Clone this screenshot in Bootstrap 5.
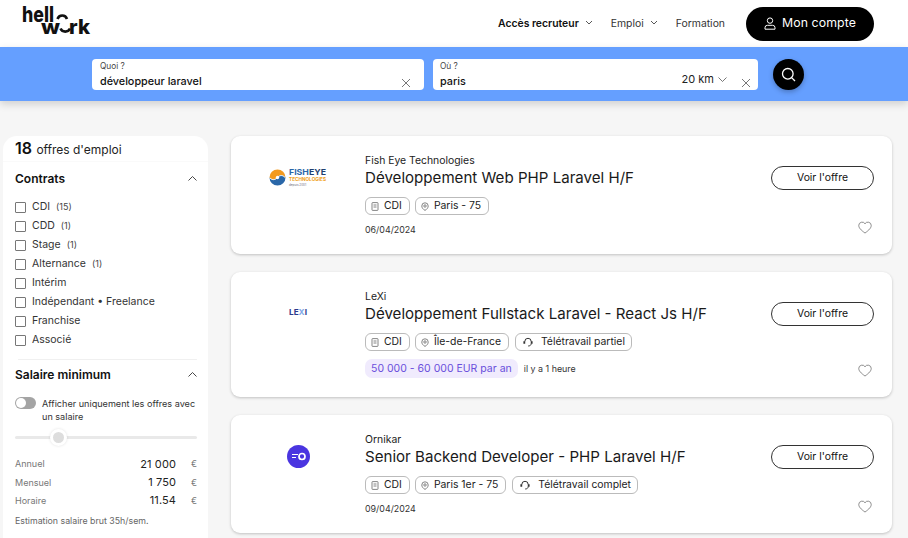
<!DOCTYPE html>
<html lang="fr"><head><meta charset="utf-8"><title>HelloWork</title>
<link href="https://cdn.jsdelivr.net/npm/bootstrap@5.3.0/dist/css/bootstrap.min.css" rel="stylesheet">
<style>
html,body{height:538px;overflow:hidden}
body{font-family:Inter,"Liberation Sans",sans-serif;background:#f6f6f6;color:#111;font-size:11px}
.hw-head{height:47px;background:#fff;padding:0 34px 0 22px}
.hw-logo{width:68px;height:36px;display:block;margin-top:-1px;overflow:visible}
.hw-logo text{font-family:Inter,sans-serif;font-weight:800;fill:#111}
.hw-nav{font-size:10.4px;color:#333;gap:18px;margin-right:21px}
.hw-nav b{color:#111;font-weight:600}
.hw-nav svg{width:8px;height:5px;margin-left:6px;vertical-align:2px}
.hw-acct{width:128px;height:34px;background:#000;color:#fff;border-radius:17px;font-size:12.3px;gap:6px;border:0;letter-spacing:.1px}
.hw-band{height:54px;background:#659fff;box-shadow:0 3px 8px rgba(0,0,0,.16);padding:12px 0 11px 92px;position:relative}
.hw-field{background:#fff;border-radius:4px;height:31px;padding:3px 7px 0 8px;position:relative;line-height:1}
.hw-f1{width:332px;margin-right:9px}.hw-f2{width:325px;margin-right:15px;padding-left:7px}
.hw-lab{font-size:8.3px;color:#444;display:block;margin-bottom:6px}
.hw-val{font-size:10.8px;font-weight:500;color:#111}
.hw-x{position:absolute;right:7px;bottom:2px;width:10px;height:10px}
.hw-f1 .hw-x{right:13px}
.hw-km{position:absolute;right:31px;bottom:5px;font-size:11px;color:#222;display:flex;align-items:center;gap:4px}
.hw-go{width:31px;height:31px;border-radius:50%;background:#000;box-shadow:0 2px 5px rgba(0,0,0,.25)}
.hw-main{padding:35px 15px 0 3px;gap:23px}
.hw-side{width:205px;height:420px;background:#fff;border-radius:14px 14px 0 0;flex:none}
.hw-count{height:26px;padding:0 12px;font-size:12px;color:#222;border-bottom:1px solid #fafafa}
.hw-count b{font-size:16px;font-weight:600;color:#111;margin-right:1px}
.hw-sect{padding:0 11px 0 12px}
.hw-s1{padding-top:8px}.hw-s2{padding-top:6px}
.hw-h{font-size:12px;font-weight:600;color:#111;height:17px}
.hw-h1{margin-bottom:10px}.hw-h2{margin-bottom:14px}
.hw-chk{height:19px;font-size:10.5px;color:#333;gap:6px;white-space:nowrap}
.hw-chk i{width:11px;height:11px;border:1px solid #777;border-radius:1px;display:block;flex:none;margin-top:1px}
.hw-chk small{font-size:9px;margin-left:6px;color:#444}
.hw-sep{border-top:1px solid #f0f0f0;margin:10px 11px 0 15px;height:0;border-radius:2px}
.hw-toggle{width:21px;height:12px;border-radius:6px;background:#a4a4a4;position:relative;flex:none}
.hw-toggle::after{content:"";position:absolute;left:1px;top:1px;width:10px;height:10px;background:#fff;border-radius:50%}
.hw-tt{font-size:9.1px;line-height:13px;color:#333;gap:6px;margin-right:-4px}
.hw-slide{height:3px;background:#e9e9e9;margin:13px 0 0;position:relative;border-radius:2px}
.hw-slide::after{content:"";position:absolute;left:35px;top:-7px;width:17px;height:17px;background:#ddd;border:3px solid #fff;border-radius:50%;box-shadow:0 0 3px rgba(0,0,0,.12)}
.hw-sal{height:18.3px;font-size:9px;color:#777}
.hw-sal span:nth-child(2){margin-left:auto;font-size:11px;color:#222;letter-spacing:.1px}
.hw-sal em{font-style:normal;width:21px;text-align:right;font-size:9px}
.hw-note{font-size:8.8px;color:#666;margin-top:4px}
.hw-list{width:661px;gap:18px}
.hw-job{background:#fff;border-radius:9px;box-shadow:0 1px 3px rgba(0,0,0,.22);padding:18px 18px 0 134px;position:relative;height:118px}
.hw-j2{height:125px}
.hw-brand{position:absolute;left:0;top:31px;width:134px;display:flex;justify-content:center}
.hw-j2 .hw-brand{top:33px}.hw-j3 .hw-brand{top:30px}
.hw-co{font-size:10.4px;color:#222;line-height:13px;margin-bottom:1px}
.hw-ti{font-size:15.1px;color:#1a1a1a;line-height:20px;margin:0 0 9px;font-weight:400}
.hw-tags{gap:5px}
.hw-tag{height:18px;border:1px solid #bbb;border-radius:6px;font-size:10.4px;color:#222;padding:0 7px 0 5px;gap:5px;background:#fff;white-space:nowrap}
.hw-tag svg{width:8px;height:9px;flex:none}
.hw-tag.hw-tw{gap:8px;padding:0 6px 0 7px;margin-left:1px}
.hw-tag.hw-tw svg{width:10px;height:10px}
.hw-date{font-size:8.9px;color:#333;line-height:11px}
.hw-d1{margin-top:9px}
.hw-paybox{margin-top:1px;gap:6px}
.hw-pay{background:#f0ebfd;color:#6a4fdc;font-size:10.5px;height:19px;padding:0 6px;border-radius:7px}
.hw-btn{position:absolute;right:18px;top:30px;width:103px;height:24px;border:1px solid #333;border-radius:12px;background:#fff;font-size:10.4px;color:#111}
.hw-heart{position:absolute;right:20px;bottom:20px;width:14px;height:13px}
</style></head><body>
<header class="hw-head d-flex align-items-center justify-content-between">
<svg class="hw-logo" viewBox="0 0 68 36" role="img" aria-label="hellowork">
<text x="0" y="16.500" font-size="22" textLength="32" lengthAdjust="spacingAndGlyphs">hell</text>
<path d="M35.500 14a5 5 0 0 1 9.500 0" fill="none" stroke="#111" stroke-width="2.600"/>
<text x="19" y="29" font-size="20" textLength="19" lengthAdjust="spacingAndGlyphs">w</text>
<path d="M38.500 23.500a5.200 5.200 0 0 0 9.500 0" fill="none" stroke="#111" stroke-width="2.600"/>
<text x="47" y="29" font-size="20" textLength="21" lengthAdjust="spacingAndGlyphs">rk</text></svg>
<div class="d-flex align-items-center">
<nav class="hw-nav d-flex align-items-center"><span><b>Accès recruteur</b><svg viewBox="0 0 8 5"><path d="M1 1l3 3 3-3" fill="none" stroke="#444" stroke-width=".9"/></svg></span><span>Emploi<svg viewBox="0 0 8 5"><path d="M1 1l3 3 3-3" fill="none" stroke="#444" stroke-width=".9"/></svg></span><span>Formation</span></nav>
<button class="hw-acct d-flex align-items-center justify-content-center"><svg width="12" height="13" viewBox="0 0 12 13" fill="none" stroke="#fff" stroke-width="1"><circle cx="6" cy="3.600" r="2.700"/><path d="M1 12.200v-1.500a2.400 2.400 0 0 1 2.400-2.400h5.200a2.400 2.400 0 0 1 2.400 2.400v1.500z"/></svg>Mon compte</button>
</div>
</header>
<section class="hw-band d-flex">
<div class="hw-field hw-f1"><span class="hw-lab">Quoi ?</span><span class="hw-val">développeur laravel</span><svg class="hw-x" viewBox="0 0 10 10"><path d="M1 1l8 8M9 1l-8 8" stroke="#555" stroke-width=".8"/></svg></div>
<div class="hw-field hw-f2"><span class="hw-lab">Où ?</span><span class="hw-val">paris</span><span class="hw-km">20 km<svg width="9" height="5" viewBox="0 0 9 5"><path d="M.5.5l4 4 4-4" fill="none" stroke="#555" stroke-width=".8"/></svg></span><svg class="hw-x" viewBox="0 0 10 10"><path d="M1 1l8 8M9 1l-8 8" stroke="#555" stroke-width=".8"/></svg></div>
<div class="hw-go d-flex align-items-center justify-content-center"><svg width="15" height="15" viewBox="0 0 15 15" fill="none" stroke="#fff" stroke-width="1.300"><circle cx="6.800" cy="6.800" r="5.300"/><path d="M10.600 10.600l3.400 3.400"/></svg></div>
</section>
<main class="hw-main d-flex align-items-start">
<aside class="hw-side">
<div class="hw-count"><b>18</b> offres d'emploi</div>
<div class="hw-sect hw-s1">
<div class="hw-h hw-h1 d-flex justify-content-between align-items-center">Contrats<svg width="9" height="5" viewBox="0 0 9 5"><path d="M.5 4.500l4-4 4 4" fill="none" stroke="#333" stroke-width=".9"/></svg></div>
<div class="hw-chk d-flex align-items-center"><i></i><span>CDI<small>(15)</small></span></div>
<div class="hw-chk d-flex align-items-center"><i></i><span>CDD<small>(1)</small></span></div>
<div class="hw-chk d-flex align-items-center"><i></i><span>Stage<small>(1)</small></span></div>
<div class="hw-chk d-flex align-items-center"><i></i><span>Alternance<small>(1)</small></span></div>
<div class="hw-chk d-flex align-items-center"><i></i><span>Intérim</span></div>
<div class="hw-chk d-flex align-items-center"><i></i><span>Indépendant • Freelance</span></div>
<div class="hw-chk d-flex align-items-center"><i></i><span>Franchise</span></div>
<div class="hw-chk d-flex align-items-center"><i></i><span>Associé</span></div>
</div>
<div class="hw-sep"></div>
<div class="hw-sect hw-s2">
<div class="hw-h hw-h2 d-flex justify-content-between align-items-center">Salaire minimum<svg width="9" height="5" viewBox="0 0 9 5"><path d="M.5 4.500l4-4 4 4" fill="none" stroke="#333" stroke-width=".9"/></svg></div>
<div class="hw-tt d-flex"><span class="hw-toggle"></span><span>Afficher uniquement les offres avec un salaire</span></div>
<div class="hw-slide"></div>
<div class="mt-3">
<div class="hw-sal d-flex align-items-center"><span>Annuel</span><span>21 000</span><em>€</em></div>
<div class="hw-sal d-flex align-items-center"><span>Mensuel</span><span>1 750</span><em>€</em></div>
<div class="hw-sal d-flex align-items-center"><span>Horaire</span><span>11.54</span><em>€</em></div>
</div>
<div class="hw-note">Estimation salaire brut 35h/sem.</div>
</div>
</aside>
<div class="hw-list d-flex flex-column">

<article class="hw-job">
<div class="hw-brand"><svg width="58" height="22" viewBox="0 0 58 22" role="img" aria-label="Fisheye Technologies"><path d="M.5 10.500A8 8 0 0 1 16.500 10.500C13 7.500 11 7.500 8.500 10.500 6 13.500 3 13.500 .5 10.500z" fill="#f39a1f"/><path d="M.5 10.500A8 8 0 0 0 16.500 10.500C13 7.500 11 7.500 8.500 10.500 6 13.500 3 13.500 .5 10.500z" fill="#2a67a8"/><path d="M1 11C3.500 13.500 6 13 8.500 10.500 11 8 13.500 7.800 16 10.500" fill="none" stroke="#fff" stroke-width=".9"/><circle cx="8.500" cy="10.500" r="1.700" fill="#fff"/><text x="20" y="8" font-size="8.200" font-weight="700" fill="#2a67a8" font-family="Inter" textLength="37" lengthAdjust="spacingAndGlyphs">FISH<tspan fill="#1f3f70">EYE</tspan></text><text x="20" y="14" font-size="5" font-weight="700" fill="#f0a020" font-family="Inter" textLength="37" lengthAdjust="spacingAndGlyphs">TECHNOLOGIES</text><text x="20" y="19" font-size="3" fill="#667" font-family="Inter">depuis 2001</text></svg></div>
<div class="hw-co">Fish Eye Technologies</div>
<h2 class="hw-ti">Développement Web PHP Laravel H/F</h2>
<div class="hw-tags d-flex mb-2">
<span class="hw-tag d-flex align-items-center"><svg viewBox="0 0 8 9" fill="none" stroke="#666" stroke-width=".8"><rect x="1" y=".6" width="6" height="7.800" rx=".6"/><path d="M2.500 3h3M2.500 5h3"/></svg>CDI</span>
<span class="hw-tag d-flex align-items-center"><svg viewBox="0 0 8 9" fill="none" stroke="#666" stroke-width=".8"><path d="M4 8.400C2 7.200.8 5.800.8 4a3.200 3.200 0 0 1 6.400 0c0 1.800-1.200 3.200-3.200 4.400z"/><circle cx="4" cy="4" r="1.200"/></svg>Paris - 75</span>
</div>
<div class="hw-date hw-d1">06/04/2024</div>
<button class="hw-btn">Voir l'offre</button>
<svg class="hw-heart" viewBox="0 0 15 14"><path d="M7.500 13C3 9.600.8 7.500.8 4.700A3.600 3.600 0 0 1 7.500 3a3.600 3.600 0 0 1 6.700 1.700c0 2.800-2.200 4.900-6.700 8.300z" fill="none" stroke="#777" stroke-width=".9"/></svg>
</article>

<article class="hw-job hw-j2">
<div class="hw-brand"><svg width="20" height="14" viewBox="0 0 20 14" role="img" aria-label="LeXi"><text x="1" y="10" font-size="8" font-weight="700" fill="#2d3a8c" font-family="Inter" textLength="18" lengthAdjust="spacingAndGlyphs">LE<tspan fill="#7fa8e8">X</tspan>I</text></svg></div>
<div class="hw-co">LeXi</div>
<h2 class="hw-ti">Développement Fullstack Laravel - React Js H/F</h2>
<div class="hw-tags d-flex mb-2">
<span class="hw-tag d-flex align-items-center"><svg viewBox="0 0 8 9" fill="none" stroke="#666" stroke-width=".8"><rect x="1" y=".6" width="6" height="7.800" rx=".6"/><path d="M2.500 3h3M2.500 5h3"/></svg>CDI</span>
<span class="hw-tag d-flex align-items-center"><svg viewBox="0 0 8 9" fill="none" stroke="#666" stroke-width=".8"><path d="M4 8.400C2 7.200.8 5.800.8 4a3.200 3.200 0 0 1 6.400 0c0 1.800-1.200 3.200-3.200 4.400z"/><circle cx="4" cy="4" r="1.200"/></svg>Île-de-France</span>
<span class="hw-tag hw-tw d-flex align-items-center"><svg viewBox="0 0 10 10" fill="none" stroke="#333" stroke-width="1"><path d="M1.800 4.500a3.200 3.200 0 0 1 6.400 0M8.200 6.500c0 1.500-1.200 2.500-3 2.500"/><path d="M1.300 4.300v2.400M8.700 4.300v2.400" stroke-width="1.800"/></svg>Télétravail partiel</span>
</div>
<div class="hw-paybox d-flex align-items-center"><span class="hw-pay d-flex align-items-center">50 000 - 60 000 EUR par an</span><span class="hw-date">il y a 1 heure</span></div>
<button class="hw-btn">Voir l'offre</button>
<svg class="hw-heart" viewBox="0 0 15 14"><path d="M7.500 13C3 9.600.8 7.500.8 4.700A3.600 3.600 0 0 1 7.500 3a3.600 3.600 0 0 1 6.700 1.700c0 2.800-2.200 4.900-6.700 8.300z" fill="none" stroke="#777" stroke-width=".9"/></svg>
</article>

<article class="hw-job hw-j3">
<div class="hw-brand"><svg width="23" height="23" viewBox="0 0 23 23" role="img" aria-label="Ornikar"><circle cx="11.500" cy="11.500" r="11.500" fill="#4a35e0"/><circle cx="15" cy="11.500" r="3" fill="none" stroke="#fff" stroke-width="1.700"/><path d="M5 9.500h6M5 12.500h4" stroke="#fff" stroke-width="1"/></svg></div>
<div class="hw-co">Ornikar</div>
<h2 class="hw-ti">Senior Backend Developer - PHP Laravel H/F</h2>
<div class="hw-tags d-flex mb-2">
<span class="hw-tag d-flex align-items-center"><svg viewBox="0 0 8 9" fill="none" stroke="#666" stroke-width=".8"><rect x="1" y=".6" width="6" height="7.800" rx=".6"/><path d="M2.500 3h3M2.500 5h3"/></svg>CDI</span>
<span class="hw-tag d-flex align-items-center"><svg viewBox="0 0 8 9" fill="none" stroke="#666" stroke-width=".8"><path d="M4 8.400C2 7.200.8 5.800.8 4a3.200 3.200 0 0 1 6.400 0c0 1.800-1.200 3.200-3.200 4.400z"/><circle cx="4" cy="4" r="1.200"/></svg>Paris 1er - 75</span>
<span class="hw-tag hw-tw d-flex align-items-center"><svg viewBox="0 0 10 10" fill="none" stroke="#333" stroke-width="1"><path d="M1.800 4.500a3.200 3.200 0 0 1 6.400 0M8.200 6.500c0 1.500-1.200 2.500-3 2.500"/><path d="M1.300 4.300v2.400M8.700 4.300v2.400" stroke-width="1.800"/></svg>Télétravail complet</span>
</div>
<div class="hw-date hw-d1">09/04/2024</div>
<button class="hw-btn">Voir l'offre</button>
<svg class="hw-heart" viewBox="0 0 15 14"><path d="M7.500 13C3 9.600.8 7.500.8 4.700A3.600 3.600 0 0 1 7.500 3a3.600 3.600 0 0 1 6.700 1.700c0 2.800-2.200 4.900-6.700 8.300z" fill="none" stroke="#777" stroke-width=".9"/></svg>
</article>

</div>
</main>
<script src="https://cdn.jsdelivr.net/npm/bootstrap@5.3.0/dist/js/bootstrap.bundle.min.js"></script>
</body></html>
